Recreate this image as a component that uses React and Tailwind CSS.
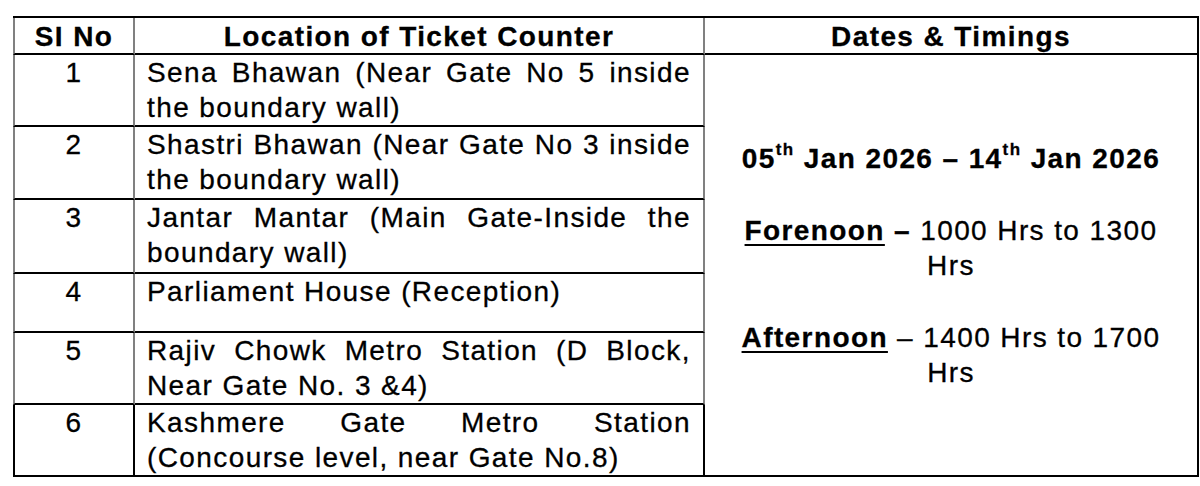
import React from 'react';

const ROWS = [
  { no: '1', lines: ['Sena Bhawan (Near Gate No 5 inside', 'the boundary wall)'] },
  { no: '2', lines: ['Shastri Bhawan (Near Gate No 3 inside', 'the boundary wall)'] },
  { no: '3', lines: ['Jantar Mantar (Main Gate-Inside the', 'boundary wall)'] },
  { no: '4', lines: ['Parliament House (Reception)'] },
  { no: '5', lines: ['Rajiv Chowk Metro Station (D Block,', 'Near Gate No. 3 &4)'] },
  { no: '6', lines: ['Kashmere Gate Metro Station', '(Concourse level, near Gate No.8)'] },
];

// justified first line: words pushed to both edges, like the PDF table
function Spread({ text }) {
  return (
    <div className="flex justify-between whitespace-nowrap">
      {text.split(' ').map((w, i) => (
        <span key={i}>{w}</span>
      ))}
    </div>
  );
}

function Th() {
  return <span className="relative -top-[13px] text-[17px] leading-none">th</span>;
}

export default function App() {
  return (
    <div className="min-h-[486px] bg-white pl-[13px] pt-[16px] font-['Liberation_Sans',Arial,sans-serif] text-[28px] leading-[35px] tracking-[1.4px] text-black [-webkit-text-stroke:0.3px_black]">
      <div className="grid w-[1186px] grid-cols-[122px_570px_494px] grid-rows-[37px_72px_73px_74px_59px_72px_72px] border-t-2 border-black">
        {/* header */}
        <div className="border-l-2 border-r-2 border-b-2 border-l-[#808080] border-r-[#808080] border-b-black pt-[1px] text-center font-bold">
          SI No
        </div>
        <div className="border-r-2 border-b-2 border-r-[#808080] border-b-black pt-[1px] text-center font-bold">
          Location of Ticket Counter
        </div>
        <div className="border-r-2 border-b-2 border-black pt-[1px] text-center font-bold">
          Dates &amp; Timings
        </div>

        {ROWS.map((row, idx) => {
          const last = idx === ROWS.length - 1;
          return (
            <React.Fragment key={row.no}>
              <div
                className={
                  last
                    ? 'col-start-1 border-l-2 border-r-2 border-b-2 border-black text-center'
                    : 'col-start-1 border-l-2 border-r-2 border-b-2 border-l-[#808080] border-r-[#808080] border-b-black text-center'
                }
              >
                {row.no}
              </div>
              <div
                className={
                  last
                    ? 'col-start-2 border-r-2 border-b-2 border-black pl-[12px] pr-[12px]'
                    : 'col-start-2 border-r-2 border-b-2 border-r-[#808080] border-b-black pl-[12px] pr-[12px]'
                }
              >
                {row.lines.length > 1 ? (
                  <>
                    <Spread text={row.lines[0]} />
                    <div className="whitespace-nowrap">{row.lines[1]}</div>
                  </>
                ) : (
                  <div className="whitespace-nowrap">{row.lines[0]}</div>
                )}
              </div>
            </React.Fragment>
          );
        })}

        {/* dates column spans all six counters */}
        <div className="col-start-3 row-start-2 row-span-6 flex flex-col items-center justify-center border-r-2 border-b-2 border-black text-center">
          <div className="whitespace-nowrap font-bold">
            05<Th /> Jan 2026 – 14<Th /> Jan 2026
          </div>
          <div className="mt-[37px] whitespace-nowrap">
            <span className="font-bold underline decoration-2 underline-offset-4">Forenoon</span>
            <span className="font-bold"> –</span> 1000 Hrs to 1300
            <br />
            Hrs
          </div>
          <div className="mt-[37px] whitespace-nowrap">
            <span className="font-bold underline decoration-2 underline-offset-4">Afternoon</span> – 1400 Hrs to 1700
            <br />
            Hrs
          </div>
        </div>
      </div>
    </div>
  );
}
